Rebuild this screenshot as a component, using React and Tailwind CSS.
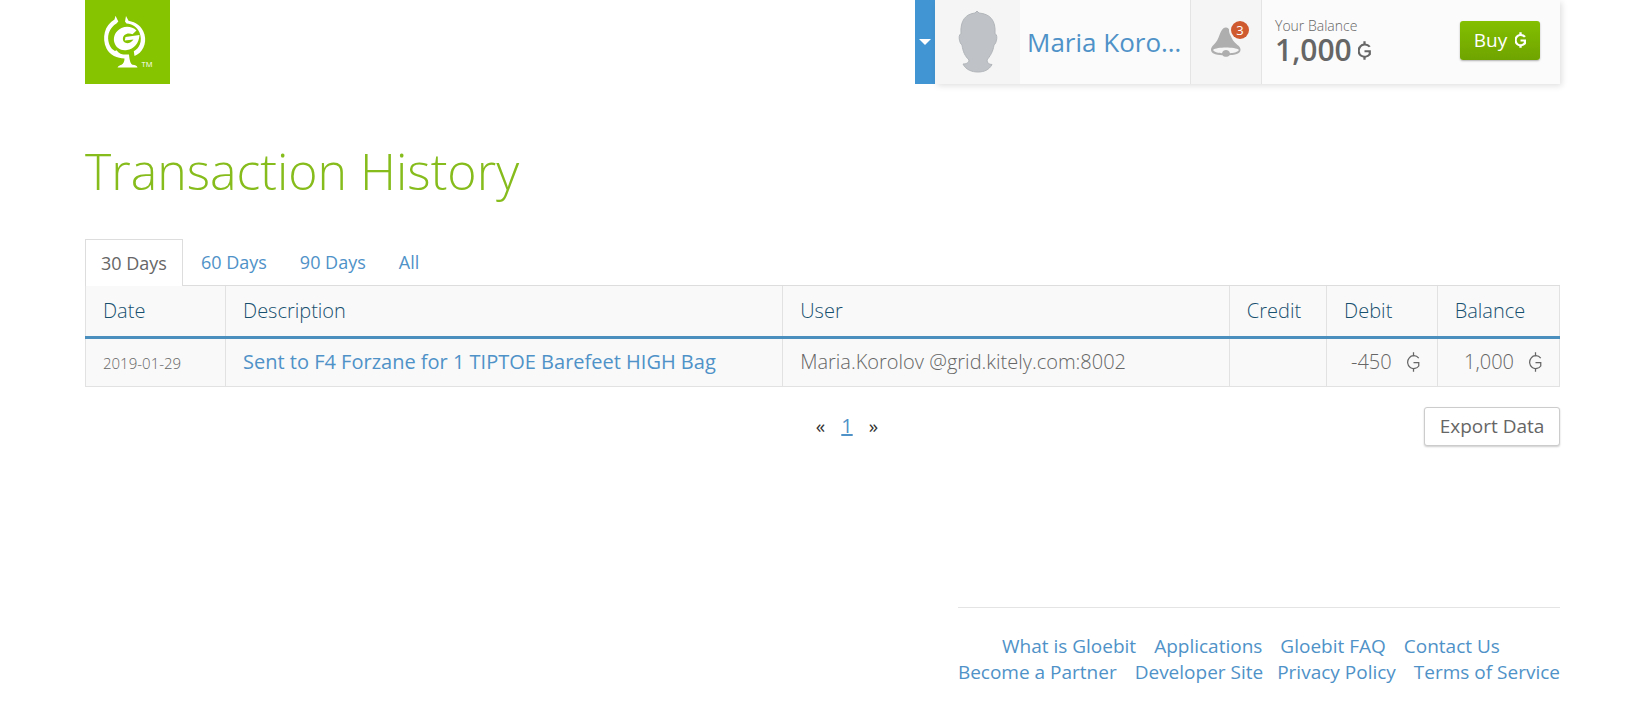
function Gloebit({ className, weight = 7 }) {
  return (
    <svg viewBox="4 2 52 86" preserveAspectRatio="none" className={className} fill="none" stroke="currentColor" strokeWidth={weight} aria-label="Gloebits" role="img">
      <path d="M51 28C41 15 22 14 13 27C3 40 5 60 17 69C28 77 44 73 51 62V48H30" />
      <path d="M30 3V20M30 71V87" />
    </svg>
  );
}

function Logo() {
  return (
    <svg viewBox="0 0 85 84" className="h-[84px] w-[85px]" role="img" aria-label="Gloebit">
      <rect width="85" height="84" fill="#86c400" />
      <g fill="#fff">
        <path d="M30.500 15.800L33.300 21.500L31.500 23.500C25 27.500 22.200 34 23.400 41C24.500 46.500 27 49.500 30 51L31.500 50.200C34 54 38 55 44 54.500C44.500 60 45.300 63.500 47.500 64.800C50 65.200 52 65.800 52.500 67.500H32.600C33 66.200 34.500 65.600 36.500 64.800C38.500 63.500 39.500 61.500 39.500 58.500C32.500 58.500 24.500 55 21.500 48.500C16.500 38 19.500 25 29.500 19.500Z" />
        <path d="M41 16L40 21.500L41.500 23.500C47 23.500 52 27 54.500 32.500C58 41.500 54 48.500 48.800 51.200L49.500 56C57.500 53 62 43.500 59.500 34.500C57 26 51 22.200 43.500 20.800Z" />
        <path d="M51.500 30.500C47.500 26.500 41.500 25.800 36.500 28C30.500 31 28 36.500 29.200 42C30.800 48 36 51 42 50C49 49 54 43.500 54.500 35L40.500 37L39.800 40.500L48.500 39.500C46.500 42.500 43 43.800 40.500 42.800C37.500 41.500 37 37.500 39.500 35C41.500 33 45 33 47.500 34.300Z" />
      </g>
      <text x="56.500" y="67" fontSize="7.500" fill="#fff" fontFamily="Open Sans, sans-serif">TM</text>
    </svg>
  );
}

function Avatar() {
  return (
    <svg viewBox="0 0 40 64" className="h-16 w-10" role="img" aria-label="Profile picture">
      <path d="M17 3L19 1L21 3C32 4 38 10 37 24C40 24 39 33 36 35C35 42 32 46 29 50C29 53 31 54.500 34 54.500C31 60 26 62 20 62C14 62 8 60 5 54C8 54 11 53 11 50C7 46 5 42 4 35C1 33 0 24 3 24C2 10 8 4 17 3Z" fill="#bfc3c8" stroke="#b2b6ba" strokeWidth="1" />
    </svg>
  );
}

function Bell() {
  return (
    <svg viewBox="0 0 30 30" className="h-[30px] w-[30px]" aria-hidden="true">
      <path d="M14.500 0.500C17.500 0 19 3 19.800 8C20.500 12 23 15 26.500 18C31 21 30.500 26 25 27.300C22 28 20 28.200 18.500 28.200C17 30.200 13 30.200 11.500 28.200C8 28.200 5 27.800 2 26.300C-1 24 -0.500 21 2.500 18C6 14.500 7 12 8.500 8C10.500 3 12 0.800 14.500 0.500Z" fill="#aeaeae" />
      <path d="M2 23C6 19.800 24 19.800 28 23C26.500 25.300 22 26 19 26.200C18 22 12 22 11 26.200C8 26 3.500 25.300 2 23Z" fill="#f5f5f5" />
    </svg>
  );
}

const tabs = ["60 Days", "90 Days", "All"];
const footerRows = [
  [["What is Gloebit", "mr-[18px]"], ["Applications", "mr-[18px]"], ["Gloebit FAQ", "mr-[18px]"], ["Contact Us", "mr-4"]],
  [["Become a Partner", "mr-[18px]"], ["Developer Site", "mr-3.5"], ["Privacy Policy", "mr-[18px]"], ["Terms of Service", ""]],
];

const th = "border-x border-[#e2e2e2] px-[17px] text-left text-[20px] leading-6 font-light text-[#17506f]";
const td = "border border-t-0 border-[#e2e2e2] px-[17px] leading-6 font-light text-[#666]";

export default function App() {
  return (
    <div className="pr-[88px] pb-8 pl-[85px] font-['Open_Sans',sans-serif] text-[#666]">
      <header className="flex h-[84px] items-stretch justify-between">
        <a href="#home"><Logo /></a>
        <div className="flex">
          <button type="button" aria-label="Account menu" className="flex w-5 items-center justify-center bg-[#4195d2]">
            <svg viewBox="0 0 12 6" className="h-1.5 w-3"><path d="M0 0H12L6 6Z" fill="#fff" /></svg>
          </button>
          <div className="flex shadow-[2px_2px_6px_rgba(0,0,0,0.12)]">
            <div className="flex w-[85px] items-center justify-center bg-[#f5f5f5]"><Avatar /></div>
            <a href="#profile" className="flex w-[170px] items-center bg-[#fbfbfb] pl-[7px] text-[26px] text-[#4f92c8]">Maria Koro…</a>
            <button type="button" aria-label="Notifications" className="flex w-[72px] items-center justify-center border-x border-[#e4e4e4] bg-[#f5f5f5]">
              <span className="relative block">
                <Bell />
                <span className="absolute -top-1.5 -right-2 block size-[18px] rounded-full bg-[#d05a30] text-center text-[13px] leading-[18px] text-white ring-2 ring-[#f5f5f5]">3</span>
              </span>
            </button>
            <div className="flex w-[298px] items-center justify-between bg-[#fbfbfb] pr-5 pb-1 pl-[13px]">
              <div>
                <div className="text-[14px] leading-5 font-light">Your Balance</div>
                <div className="flex items-center gap-1.5 text-[30px] leading-7 font-semibold text-[#666]">1,000<Gloebit className="h-[19px] w-[13px]" weight={9} /></div>
              </div>
              <button type="button" className="flex h-[39px] w-20 items-center justify-center gap-2 rounded-[3px] bg-linear-to-b from-[#84bf00] to-[#6fa400] text-[19px] text-white shadow-[0_1px_2px_rgba(0,0,0,0.3)]">Buy<Gloebit className="h-4 w-[11px]" weight={11} /></button>
            </div>
          </div>
        </div>
      </header>
      <main>
        <h1 className="mt-[53px] text-[50px] leading-[68px] font-light text-[#86bc1c]">Transaction History</h1>
        <nav className="mt-[34px] flex h-[47px] border-b border-[#ddd] text-[18px]">
          <a href="#30" aria-current="page" className="-mb-px flex items-center border border-b-0 border-[#ddd] bg-white px-[15px] text-[#666]">30 Days</a>
          <div className="ml-[18px] flex items-center gap-[33px]">
            {tabs.map((t) => <a key={t} href="#range" className="text-[#4f92c8]">{t}</a>)}
          </div>
        </nav>
        <table className="w-full table-fixed border-collapse bg-[#f9f9f9]">
          <colgroup>
            <col className="w-[9.5%]" /><col className="w-[37.8%]" /><col className="w-[30.3%]" /><col className="w-[6.6%]" /><col className="w-[7.5%]" /><col className="w-[8.3%]" />
          </colgroup>
          <thead>
            <tr className="h-[51px] border-b-3 border-[#4b8fbf]">
              {["Date", "Description", "User", "Credit", "Debit", "Balance"].map((h) => <th key={h} scope="col" className={th}>{h}</th>)}
            </tr>
          </thead>
          <tbody>
            <tr className="h-[49px] text-[20px]">
              <td className={td}><span className="text-[15px]">2019-01-29</span></td>
              <td className={td}><a href="#transaction" className="font-normal text-[#4f92c8]">Sent to F4 Forzane for 1 TIPTOE Barefeet HIGH Bag</a></td>
              <td className={td}>Maria.Korolov @grid.kitely.com:8002</td>
              <td className={td}></td>
              <td className={td}><span className="flex items-center justify-end gap-[15px]">-450<Gloebit className="h-5 w-[13px]" weight={5} /></span></td>
              <td className={td}><span className="flex items-center justify-end gap-[15px]">1,000<Gloebit className="h-5 w-[13px]" weight={5} /></span></td>
            </tr>
          </tbody>
        </table>
        <div className="mt-5 grid grid-cols-[1fr_auto_1fr] items-center">
          <nav aria-label="Pages" className="col-start-2 flex items-center gap-4 pl-[49px] text-[19px] text-[#333]">
            <span>«</span><a href="#1" className="text-[20px] text-[#4f92c8] underline decoration-2">1</a><span>»</span>
          </nav>
          <button type="button" className="h-[39px] w-[136px] justify-self-end rounded-[3px] border border-[#ccc] bg-white text-[19px] text-[#666] shadow-[0_1px_2px_rgba(0,0,0,0.2)]">Export Data</button>
        </div>
      </main>
      <footer className="mt-[161px] ml-auto w-fit border-t border-[#e4e4e4] pt-[25px] text-center text-[19px] leading-[26px]">
        {footerRows.map((row, i) => (
          <div key={i} className="flex justify-center whitespace-nowrap">
            {row.map(([label, gap]) => <a key={label} href="#info" className={`text-[#4f92c8] ${gap}`}>{label}</a>)}
          </div>
        ))}
      </footer>
    </div>
  );
}
